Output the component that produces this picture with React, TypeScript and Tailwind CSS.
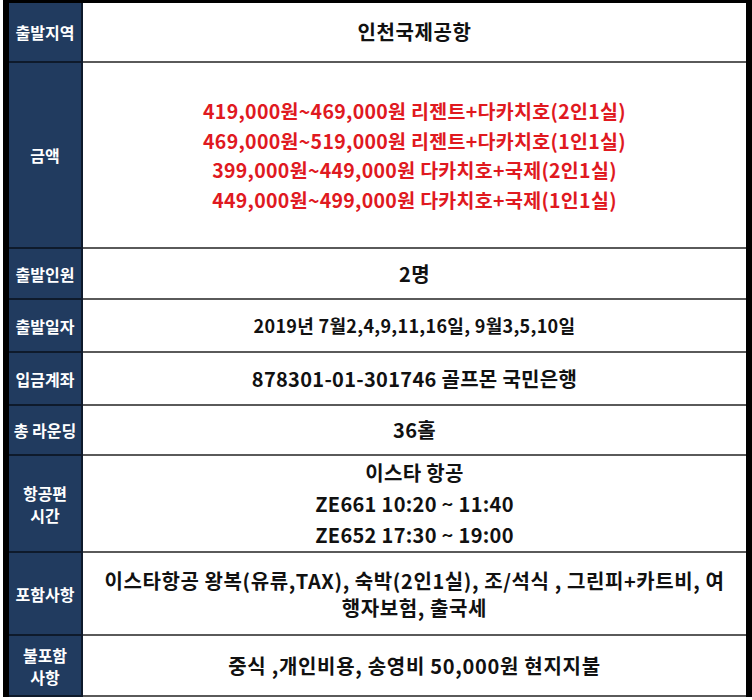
const font = { fontFamily: '"Noto Sans CJK KR", "Noto Sans", sans-serif' }

type Row = {
  label: React.ReactNode
  h: string
  value: React.ReactNode
}

const rows: Row[] = [
  { label: "출발지역", h: "h-[60px]", value: <p className="tracking-[0.6px]">인천국제공항</p> },
  {
    label: "금액",
    h: "h-[186px]",
    value: (
      <div className="text-[#e0191f] text-[19.5px] leading-[29.5px]">
        <p>419,000원~469,000원 리젠트+다카치호(2인1실)</p>
        <p>469,000원~519,000원 리젠트+다카치호(1인1실)</p>
        <p>399,000원~449,000원 다카치호+국제(2인1실)</p>
        <p>449,000원~499,000원 다카치호+국제(1인1실)</p>
      </div>
    ),
  },
  { label: "출발인원", h: "h-[51px]", value: <p>2명</p> },
  { label: "출발일자", h: "h-[53px]", value: <p className="text-[18px]">2019년 7월2,4,9,11,16일, 9월3,5,10일</p> },
  { label: "입금계좌", h: "h-[53px]", value: <p>878301-01-301746 골프몬 국민은행</p> },
  { label: "총 라운딩", h: "h-[50px]", value: <p>36홀</p> },
  {
    label: (
      <>
        항공편
        <br />
        시간
      </>
    ),
    h: "h-[97px]",
    value: (
      <div className="leading-[31px]">
        <p>이스타 항공</p>
        <p>ZE661 10:20 ~ 11:40</p>
        <p>ZE652 17:30 ~ 19:00</p>
      </div>
    ),
  },
  {
    label: "포함사항",
    h: "h-[83px]",
    value: (
      <div className="leading-[27px] tracking-[0.6px]">
        <p>이스타항공 왕복(유류,TAX), 숙박(2인1실), 조/석식 , 그린피+카트비, 여</p>
        <p>행자보험, 출국세</p>
      </div>
    ),
  },
  {
    label: (
      <>
        불포함
        <br />
        사항
      </>
    ),
    h: "h-[61px]",
    value: <p className="tracking-[0.7px]">중식 ,개인비용, 송영비 50,000원 현지지불</p>,
  },
]

export default function App() {
  return (
    <div className="w-[752px] h-[700px] bg-white overflow-hidden" style={font}>
      <div className="ml-[3px] flex flex-col border-t-[3px] border-l-[6px] border-r-[6px] border-black">
        {rows.map((row, i) => (
          <div key={i} className={`flex ${row.h}`}>
            <div className="w-[74px] shrink-0 flex items-center justify-center bg-[#213b5f] border-r-2 border-b-2 border-r-[#0e1a2b] border-b-[#0e1a2b] text-white text-[16px] font-bold leading-[22px] text-center whitespace-nowrap">
              <span>{row.label}</span>
            </div>
            <div className="flex-1 flex items-center justify-center border-b-2 border-[#5a5a5a] text-[#111] text-[20px] tracking-[0.3px] font-bold text-center">
              {row.value}
            </div>
          </div>
        ))}
      </div>
    </div>
  )
}
